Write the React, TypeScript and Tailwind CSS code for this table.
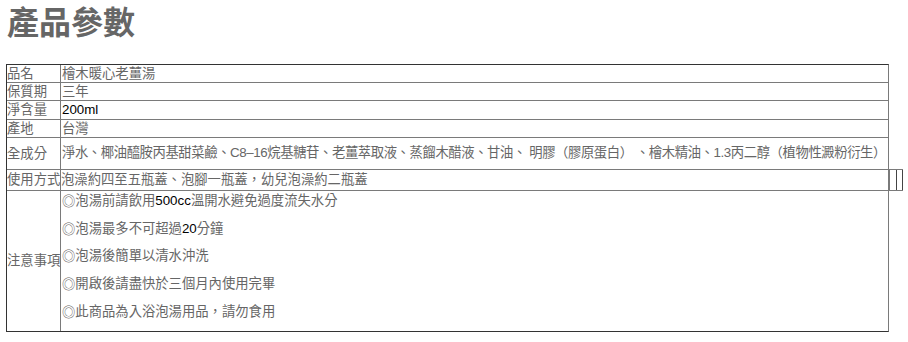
import React from "react";

const font = {
  fontFamily: '"Liberation Sans", "Noto Sans CJK TC", sans-serif',
};
const cjk = { fontFamily: '"Noto Sans CJK TC", sans-serif' };

function Row({
  label,
  h,
  children,
  first,
  extra,
}: {
  label: string;
  h: string;
  children: React.ReactNode;
  first?: boolean;
  extra?: boolean;
}) {
  return (
    <div
      className={`flex ${h} ${first ? "" : "border-t border-[#7a7a7a]"} ${extra ? "-mr-[15px]" : ""}`}
    >
      <div className="w-[54px] shrink-0 border-r border-[#7a7a7a] flex items-center whitespace-nowrap overflow-hidden">
        {label}
      </div>
      {children}
      {extra && (
        <div className="flex h-[21px] -mb-px shrink-0 border-b border-[#7a7a7a]">
          <div className="w-[7px] border-l border-[#7a7a7a]" />
          <div className="w-[7px] border-l border-r border-[#444]" />
        </div>
      )}
    </div>
  );
}

function Mark() {
  return <span style={cjk}>◎</span>;
}

export default function App() {
  return (
    <div lang="zh-Hant" className="w-[908px] h-[342px] bg-white overflow-hidden" style={font}>
      <div className="pl-[7px] pt-[4px] h-[64px]">
        <div className="text-[32px] leading-[38px] font-bold text-[#666666]">產品參數</div>
      </div>
      <div className="ml-[6px] w-[883px] border-t border-l border-b border-t-[#333] border-l-[#333] border-b-[#333] border-r border-r-[#7a7a7a] text-[13.333px] leading-[16px] text-[#666666]">
        <Row label="品名" h="h-[17px]" first>
          <div className="flex-1 flex items-center pl-[1px]">檜木暖心老薑湯</div>
        </Row>
        <Row label="保質期" h="h-[18px]">
          <div className="flex-1 flex items-center pl-[1px]">三年</div>
        </Row>
        <Row label="淨含量" h="h-[19px]">
          <div className="flex-1 flex items-center pl-[1px] text-black">200ml</div>
        </Row>
        <Row label="產地" h="h-[18px]">
          <div className="flex-1 flex items-center pl-[1px]">台灣</div>
        </Row>
        <Row label="全成分" h="h-[32px]">
          <div className="flex-1 flex items-center pl-[1px] pb-[2px] whitespace-nowrap tracking-[-0.4px]">
            淨水、椰油醯胺丙基甜菜鹼、C8–16烷基糖苷、老薑萃取液、蒸餾木醋液、甘油、 明膠（膠原蛋白） 、檜木精油、1.3丙二醇（植物性澱粉衍生）
          </div>
        </Row>
        <Row label="使用方式" h="h-[21px]" extra>
          <div className="flex-1 flex items-center whitespace-nowrap">
            泡澡約四至五瓶蓋、泡腳一瓶蓋，幼兒泡澡約二瓶蓋
          </div>
        </Row>
        <Row label="注意事項" h="h-[141px]">
          <div className="flex-1 flex flex-col gap-[10px] pt-[1px] pb-[10px] pl-[1px]">
            <div className="h-[18px] flex items-center">
              <Mark />泡湯前請飲用<span className="text-black">500cc</span>溫開水避免過度流失水分
            </div>
            <div className="h-[18px] flex items-center">
              <Mark />泡湯最多不可超過<span className="text-black">20</span>分鐘
            </div>
            <div className="h-[18px] flex items-center"><Mark />泡湯後簡單以清水沖洗</div>
            <div className="h-[18px] flex items-center"><Mark />開啟後請盡快於三個月內使用完畢</div>
            <div className="h-[18px] flex items-center"><Mark />此商品為入浴泡湯用品，請勿食用</div>
          </div>
        </Row>
      </div>
    </div>
  );
}
